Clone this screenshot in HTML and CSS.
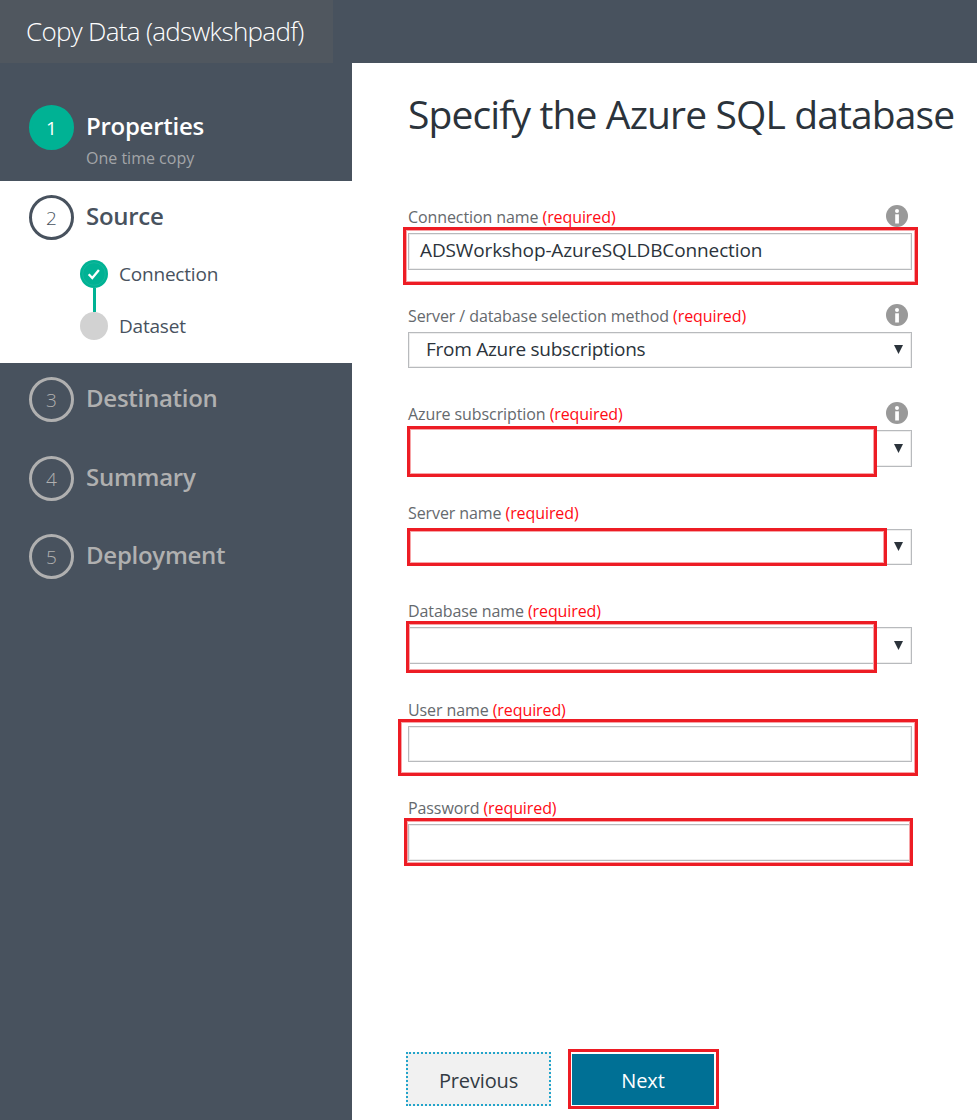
FILE: index.html
```html
<!DOCTYPE html>
<html lang="en">
<head>
<meta charset="utf-8">
<title>Copy Data (adswkshpadf)</title>
<link rel="stylesheet" href="styles.css">
</head>
<body>
<header class="topbar"><div class="tab"><span class="tab-text">Copy Data (adswkshpadf)</span></div></header>
<div class="layout">
  <nav class="sidebar">
    <section class="step done">
      <div class="circle">1</div>
      <div class="step-body"><div><span class="name">Properties</span></div><div class="sub">One time copy</div></div>
    </section>
    <section class="step active">
      <div class="circle">2</div>
      <div class="step-body">
        <div><span class="name">Source</span></div>
        <div class="substeps">
          <div class="substep">
            <svg class="dot" viewBox="0 0 28 28"><circle cx="14" cy="14" r="14" fill="#00b294"/><circle cx="14" cy="14" r="11.3" fill="none" stroke="#22bba1" stroke-width=".6"/><path d="M8.7 14.2l3.6 3.8 6.6-8" fill="none" stroke="#fff" stroke-width="2.3"/></svg>
            <span>Connection</span>
          </div>
          <div class="link"></div>
          <div class="substep">
            <svg class="dot" viewBox="0 0 28 28"><circle cx="14" cy="14" r="14" fill="#d2d2d2"/></svg>
            <span>Dataset</span>
          </div>
        </div>
      </div>
    </section>
    <section class="step"><div class="circle">3</div><div class="step-body"><div><span class="name">Destination</span></div></div></section>
    <section class="step"><div class="circle">4</div><div class="step-body"><div><span class="name">Summary</span></div></div></section>
    <section class="step"><div class="circle">5</div><div class="step-body"><div><span class="name">Deployment</span></div></div></section>
  </nav>
  <main class="content">
    <h1>Specify the Azure SQL database</h1>
    <form class="form">
      <div class="field">
        <div class="label"><span>Connection name <em>(required)</em></span><svg class="info" viewBox="0 0 22 22"><circle cx="11" cy="11" r="11" fill="#999"/><circle cx="11" cy="6" r="2" fill="#fff"/><path d="M9.2 9.3h3.7v9.2H9.2z" fill="#fff"/></svg></div>
        <div class="box"><span class="v1">ADSWorkshop-AzureSQLDBConnection</span></div>
        <div class="mark m1"></div>
      </div>
      <div class="field">
        <div class="label"><span>Server / database selection method <em>(required)</em></span><svg class="info" viewBox="0 0 22 22"><circle cx="11" cy="11" r="11" fill="#999"/><circle cx="11" cy="6" r="2" fill="#fff"/><path d="M9.2 9.3h3.7v9.2H9.2z" fill="#fff"/></svg></div>
        <div class="box select"><span class="v2">From Azure subscriptions</span><svg class="arrow" viewBox="0 0 9 9"><path d="M0 0h9L4.5 9z" fill="#2b333b"/></svg></div>
      </div>
      <div class="field">
        <div class="label"><span>Azure subscription <em>(required)</em></span><svg class="info" viewBox="0 0 22 22"><circle cx="11" cy="11" r="11" fill="#999"/><circle cx="11" cy="6" r="2" fill="#fff"/><path d="M9.2 9.3h3.7v9.2H9.2z" fill="#fff"/></svg></div>
        <div class="box select"><svg class="arrow" viewBox="0 0 9 9"><path d="M0 0h9L4.5 9z" fill="#2b333b"/></svg></div>
        <div class="mark m2"></div>
      </div>
      <div class="field">
        <div class="label"><span>Server name <em>(required)</em></span></div>
        <div class="box select"><svg class="arrow" viewBox="0 0 9 9"><path d="M0 0h9L4.5 9z" fill="#2b333b"/></svg></div>
        <div class="mark m3"></div>
      </div>
      <div class="field">
        <div class="label"><span>Database name <em>(required)</em></span></div>
        <div class="box select"><svg class="arrow" viewBox="0 0 9 9"><path d="M0 0h9L4.5 9z" fill="#2b333b"/></svg></div>
        <div class="mark m4"></div>
      </div>
      <div class="field">
        <div class="label"><span>User name <em>(required)</em></span></div>
        <div class="box"></div>
        <div class="mark m5"></div>
      </div>
      <div class="field">
        <div class="label"><span>Password <em>(required)</em></span></div>
        <div class="box"></div>
        <div class="mark m6"></div>
      </div>
    </form>
    <div class="actions">
      <button class="btn prev" type="button">Previous</button>
      <div class="next-wrap"><button class="btn next" type="button">Next</button></div>
    </div>
  </main>
</div>
</body>
</html>
```
FILE: styles.css
```css
* { box-sizing: border-box; }
body { margin: 0; width: 977px; height: 1120px; overflow: hidden; background: #fff; font-family: "Open Sans", "Noto Sans", sans-serif; color: #48525e; }
.topbar { height: 63px; background: #48525e; }
.tab { width: 333px; height: 63px; padding-left: 26px; background: #50575f; color: #fff; font-size: 26px; font-weight: 300; line-height: 62px; white-space: nowrap; }
.tab-text { letter-spacing: -0.7px; }
.layout { display: flex; height: 1057px; }
.sidebar { width: 352px; flex: none; background: #48525e; }
.step { display: flex; gap: 12px; height: 78.5px; padding: 14px 0 0 29px; color: #b0b0b0; }
.step.done { height: 118px; padding-top: 42px; color: #fff; }
.step.active { height: 182px; background: #fff; color: #48525e; }
.circle { width: 45px; height: 45px; flex: none; border: 3px solid currentColor; border-radius: 50%; font-size: 19px; font-weight: 300; line-height: 40px; text-align: center; }
.done .circle { background: #00b294; border-color: #00b294; font-weight: 400; }
.step-body { line-height: 41px; white-space: nowrap; }
.name { font-size: 24px; font-weight: 600; letter-spacing: -0.27px; }
.sub { margin-top: -3px; font-size: 16px; line-height: 22px; color: #a3a5a8; }
.substeps { margin: 20px 0 0 -6px; font-size: 19px; letter-spacing: -0.2px; }
.substep { display: flex; align-items: center; gap: 11px; height: 28px; line-height: 28px; }
.dot { width: 28px; height: 28px; flex: none; }
.link { width: 3px; height: 24px; margin-left: 12.5px; background: #00b294; }
.content { flex: 1; padding: 0 0 0 56px; }
h1 { height: 142px; margin: 0; padding-top: 22px; font-size: 39px; line-height: 58px; font-weight: 400; letter-spacing: -0.87px; color: #2b333b; white-space: nowrap; }
.field { position: relative; width: 504px; height: 98.5px; }
.label { display: flex; justify-content: space-between; height: 28px; font-size: 16px; line-height: 25px; letter-spacing: -0.09px; color: #65696d; white-space: nowrap; }
.label em { font-style: normal; color: #ff0a14; }
.info { width: 22px; height: 22px; margin-right: 4px; }
.box { display: flex; align-items: center; justify-content: space-between; height: 36.5px; padding: 0 8px 0 11px; border: 1.5px solid #b8babd; box-shadow: inset 0 0 0 1px #eee; font-size: 19px; line-height: 34px; color: #2b333b; }
.box span { margin-top: -2px; }
.v1 { letter-spacing: -0.12px; }
.v2 { letter-spacing: -0.27px; }
.select { padding-left: 17px; }
.arrow { width: 9px; height: 9px; margin-left: auto; }
.mark { position: absolute; border: 3px solid #ed1c24; box-shadow: inset 0 0 0 1px #f7a4a7; }
.m1 { left: -5px; top: 21.5px; width: 515px; height: 58px; }
.m2 { left: -1px; top: 23.5px; width: 470px; height: 51px; background: #fff; }
.m3 { left: -1px; top: 27.8px; width: 480px; height: 38px; background: #fff; }
.m4 { left: -2px; top: 21.5px; width: 471px; height: 52px; }
.m5 { left: -10px; top: 21px; width: 520px; height: 57px; }
.m6 { left: -4px; top: 22.3px; width: 509px; height: 48px; }
.actions { display: flex; align-items: flex-start; gap: 17px; margin: 154.5px 0 0 -2px; }
.btn { display: block; padding: 0; border: 0; font-family: inherit; font-size: 20px; letter-spacing: -0.15px; }
.prev { width: 145px; height: 54px; margin-top: 3px; padding-top: 3px; border: 2px dotted #22a4ca; background: #f1f1f1; color: #333b43; }
.next-wrap { width: 151px; height: 60px; padding: 2px 1px 1px; border: 3px solid #ed1c24; }
.next { width: 142px; height: 51px; padding-top: 2px; background: #007095; color: #fff; }
```
